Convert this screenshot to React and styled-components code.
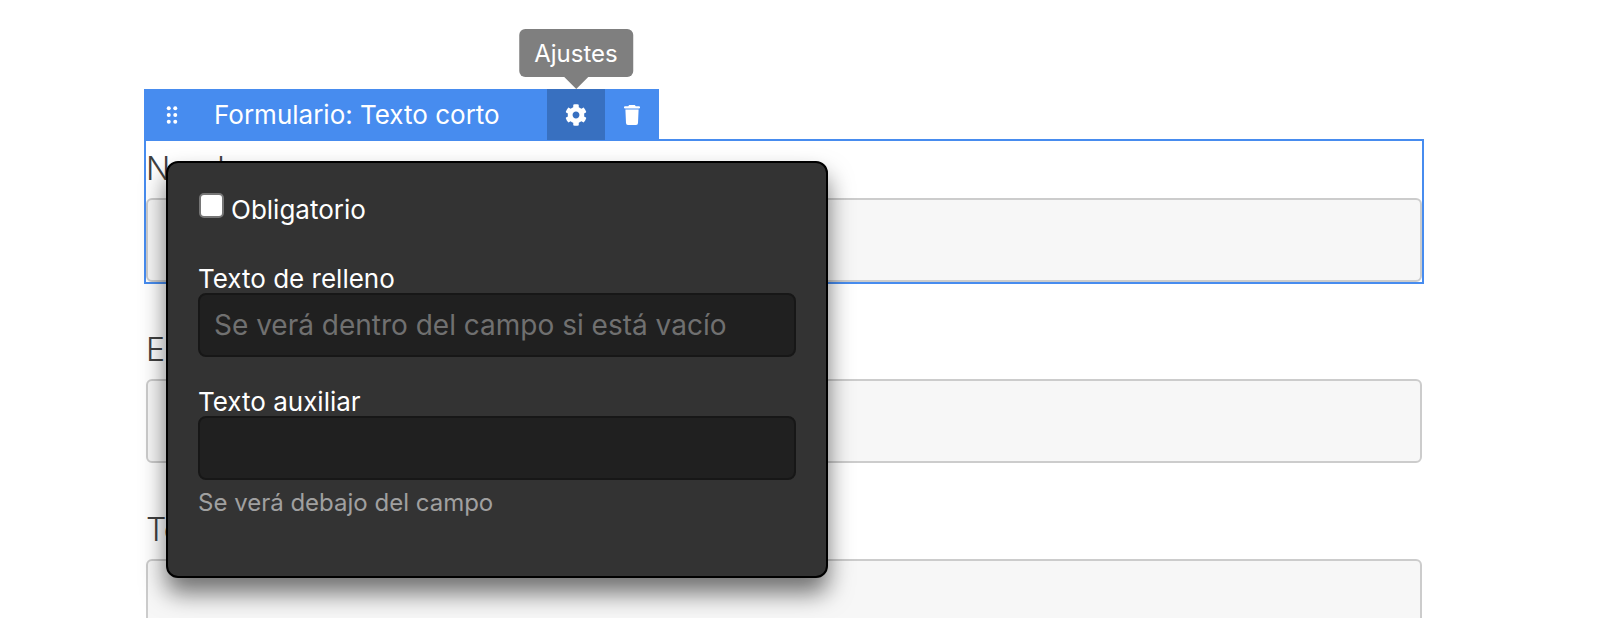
import React from "react";
import styled, { createGlobalStyle } from "styled-components";
import { FaCog } from "react-icons/fa";

const Global = createGlobalStyle`
  html, body { margin: 0; padding: 0; height: 618px; overflow: hidden; background: #fff; }
  body { font-family: Inter, "Liberation Sans", sans-serif; }
`;
const Page = styled.div`
  width: 1600px; height: 618px; overflow: hidden;
  padding: 89px 0 0 144px; box-sizing: border-box;
`;
const Editor = styled.div`
  position: relative; width: 1280px; display: flex; flex-direction: column;
`;
const Toolbar = styled.div`
  position: relative; z-index: 2; display: flex; align-items: stretch; width: 515px; height: 51px;
  background: #478cef; color: #fff;
`;
const Handle = styled.div`
  width: 56px; display: flex; align-items: center; justify-content: center;
`;
const Title = styled.div`
  flex: 1; padding-left: 14px; display: flex; align-items: center;
  font-size: 26px;
`;
const ToolButton = styled.div`
  position: relative; width: ${p => p.$w}px; display: flex; align-items: center; justify-content: center;
  background: ${p => (p.$active ? "#3870c0" : "transparent")};
  font-size: 22px;
`;
const Tooltip = styled.div`
  position: absolute; left: 50%; bottom: 63px; transform: translateX(-50%);
  padding: 0 15px; height: 48px; display: flex; align-items: center;
  background: #7f7f7f; color: #fff; border-radius: 6px; font-size: 24px; white-space: nowrap;
  &::after {
    content: ""; position: absolute; left: 50%; top: 100%; margin-left: -12px;
    border: 12px solid transparent; border-bottom: 0; border-top-color: #7f7f7f;
  }
`;
const Field = styled.div`
  box-sizing: border-box; display: flex; flex-direction: column;
  border: 2px solid ${p => (p.$selected ? "#478cef" : "transparent")};
  margin-top: ${p => (p.$selected ? -1 : 35)}px;
  margin-bottom: ${p => (p.$selected ? 1 : 0)}px;
`;
const FieldLabel = styled.div`
  font-size: 32px; font-weight: 300; color: #404040; line-height: 56px; height: 57px; white-space: nowrap;
`;
const FieldInput = styled.div`
  box-sizing: border-box; height: 84px; flex: none; background: #f7f7f7;
  border: 2px solid #ccc; border-radius: 6px;
`;
const Panel = styled.div`
  position: absolute; z-index: 3; left: 22px; top: 72px; width: 662px; height: 417px; box-sizing: border-box;
  padding: 32px 30px 0 30px;
  background: #333; border: 2px solid #000; border-radius: 12px; color: #fff;
  box-shadow: 0 15px 25px rgba(0,0,0,.55);
  display: flex; flex-direction: column;
`;
const CheckRow = styled.label`
  display: flex; align-items: center; gap: 7px; font-size: 26px; line-height: 30px; height: 30px;
`;
const Check = styled.span`
  box-sizing: border-box; width: 25px; height: 25px; margin: -9px 0 0 1px; background: #fff;
  border: 2px solid #767676; border-radius: 5px;
`;
const PanelField = styled.div`
  display: flex; flex-direction: column; margin-top: ${p => p.$mt}px;
`;
const PanelLabel = styled.div`
  font-size: 26px; line-height: 30px; height: 29px;
`;
const DarkInput = styled.div`
  box-sizing: border-box; height: 64px; background: #202020; border: 2px solid #171717; border-radius: 8px;
  padding: 0 14px; display: flex; align-items: center; font-size: 28px; color: #707070; white-space: nowrap;
`;
const Help = styled.div`
  margin-top: 9px; font-size: 24px; line-height: 28px; color: #a0a0a0;
`;
const Dots = () => (
  <svg width="14" height="20" viewBox="0 0 14 20" fill="#fff">
    {[3.3, 10, 16.7].map(y => [3.75, 10.25].map(x => <circle key={`${x}${y}`} cx={x} cy={y} r="2" />))}
  </svg>
);
const Trash = () => (
  <svg width="16" height="20" viewBox="0 0 16 20" fill="#fff">
    <path d="M5.2 0h5.6l1 1.2H15a1.15 1.15 0 0 1 0 2.3H1a1.15 1.15 0 0 1 0-2.3h3.2z" />
    <path d="M1.4 4.6h13.2l-.6 13.4a2 2 0 0 1-2 2H4a2 2 0 0 1-2-2z" />
  </svg>
);

export default function App() {
  return (
    <Page>
      <Global />
      <Editor>
        <Toolbar>
          <Handle><Dots /></Handle>
          <Title>Formulario: Texto corto</Title>
          <ToolButton $w={58} $active>
            <Tooltip>Ajustes</Tooltip>
            <FaCog />
          </ToolButton>
          <ToolButton $w={54}><Trash /></ToolButton>
        </Toolbar>
        <Field $selected>
          <FieldLabel>Nombre</FieldLabel>
          <FieldInput />
        </Field>
        <Field>
          <FieldLabel>Email</FieldLabel>
          <FieldInput />
        </Field>
        <Field>
          <FieldLabel>Teléfono</FieldLabel>
          <FieldInput />
        </Field>
        <Panel>
          <CheckRow><Check />Obligatorio</CheckRow>
          <PanelField $mt={39}>
            <PanelLabel>Texto de relleno</PanelLabel>
            <DarkInput>Se verá dentro del campo si está vacío</DarkInput>
          </PanelField>
          <PanelField $mt={30}>
            <PanelLabel>Texto auxiliar</PanelLabel>
            <DarkInput />
            <Help>Se verá debajo del campo</Help>
          </PanelField>
        </Panel>
      </Editor>
    </Page>
  );
}
